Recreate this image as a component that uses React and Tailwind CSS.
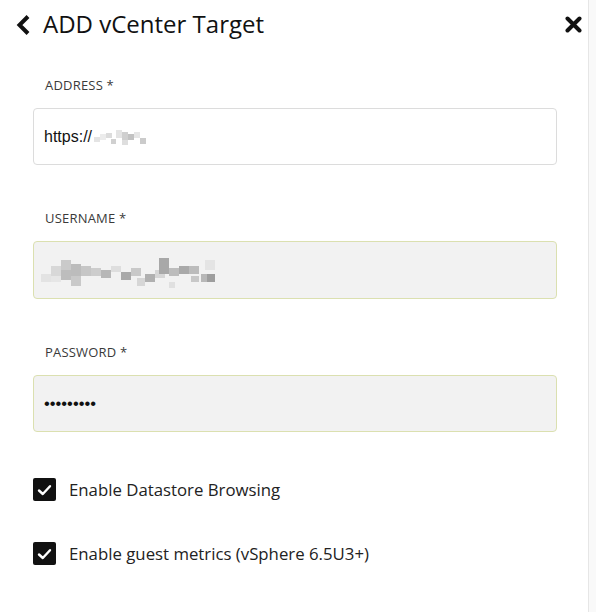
import React from "react";

function Blur({ cells, w, h }) {
  return (
    <svg width={w} height={h} viewBox={`0 0 ${w} ${h}`} className="block">
      {cells.map((c, i) => (
        <rect key={i} x={c[0]} y={c[1]} width={c[2]} height={c[3]} fill={c[4]} />
      ))}
    </svg>
  );
}

const addrCells = [
  [0, 9, 6, 5, "#e4e4e4"],
  [6, 6, 6, 6, "#ececec"],
  [12, 5, 6, 5, "#dcdcdc"],
  [17, 11, 5, 5, "#d0d0d0"],
  [22, 2, 6, 8, "#e4e4e4"],
  [28, 4, 6, 8, "#cfcfcf"],
  [28, 12, 6, 5, "#dedede"],
  [34, 6, 6, 6, "#c2c2c2"],
  [40, 4, 6, 6, "#e6e6e6"],
  [46, 10, 6, 6, "#cbcbcb"],
];

const userCells = [
  [0, 22, 10, 8, "#e3e3e3"],
  [10, 14, 10, 10, "#d8d8d8"],
  [10, 24, 10, 6, "#e6e6e6"],
  [20, 8, 10, 10, "#cacaca"],
  [20, 18, 10, 10, "#bdbdbd"],
  [30, 12, 10, 12, "#bcbcbc"],
  [30, 24, 10, 10, "#c9c9c9"],
  [40, 14, 10, 10, "#c6c6c6"],
  [50, 16, 10, 8, "#cdcdcd"],
  [60, 18, 10, 8, "#b7b7b7"],
  [70, 14, 10, 6, "#dedede"],
  [80, 20, 10, 8, "#a9a9a9"],
  [90, 16, 10, 8, "#c9c9c9"],
  [96, 26, 8, 8, "#d6d6d6"],
  [104, 22, 10, 8, "#b0b0b0"],
  [114, 18, 10, 8, "#d6d6d6"],
  [118, 6, 10, 16, "#a8a8a8"],
  [128, 16, 10, 8, "#bdbdbd"],
  [128, 30, 6, 6, "#e0e0e0"],
  [138, 14, 10, 8, "#a9a9a9"],
  [148, 14, 10, 8, "#bcbcbc"],
  [150, 24, 8, 6, "#c8c8c8"],
  [160, 22, 10, 8, "#b8b8b8"],
  [164, 8, 10, 10, "#e4e4e4"],
  [166, 22, 8, 8, "#9e9e9e"],
];

function Field({ label, children, filled, h = "h-[57px]" }) {
  return (
    <div className="flex flex-col">
      <div className="pl-3 text-[13px] leading-[18px] text-[#3a3a3a] tracking-[0.2px]">{label}</div>
      <div
        className={
          "mt-[14px] rounded-[4px] border flex items-center px-[10px] " +
          h +
          " " +
          (filled ? "bg-[#f2f2f2] border-[#dbe0b0]" : "bg-white border-[#dcdcdc]")
        }
      >
        {children}
      </div>
    </div>
  );
}

function Check({ label }) {
  return (
    <div className="flex items-center gap-[13px]">
      <div className="w-[23px] h-[23px] rounded-[2px] bg-[#111] flex items-center justify-center">
        <svg width="15" height="12" viewBox="0 0 15 12">
          <path d="M2 6.5 L5.8 10 L13 2.2" fill="none" stroke="white" strokeWidth="2.4" strokeLinecap="round" strokeLinejoin="round" />
        </svg>
      </div>
      <span className="text-[16.8px] text-[#222]">{label}</span>
    </div>
  );
}

export default function App() {
  return (
    <div className="w-[596px] h-[612px] flex bg-white" style={{ fontFamily: '"Open Sans", sans-serif' }}>
      <div className="w-[589px] border-r border-[#e6e6e6] flex flex-col">
        <div className="h-[48px] flex items-center pl-[15px] pr-[6px]">
          <svg width="16" height="22" viewBox="0 0 16 22" className="mt-[1px]">
            <path d="M13 2.5 L4.5 11 L13 19.5" fill="none" stroke="#111" strokeWidth="4" strokeLinejoin="miter" />
          </svg>
          <span className="ml-[12px] text-[24px] text-[#111] leading-none">ADD vCenter Target</span>
          <div className="flex-1" />
          <svg width="17" height="17" viewBox="0 0 17 17">
            <path d="M2.5 2.5 L14.5 14.5 M14.5 2.5 L2.5 14.5" stroke="#111" strokeWidth="4" strokeLinecap="round" />
          </svg>
        </div>
        <div className="px-[33px] pr-[31px] pt-[28px] flex flex-col gap-[44px]">
          <Field label="ADDRESS *">
            <span className="text-[16px] text-[#111]" style={{ fontFamily: '"Liberation Sans", Arial, sans-serif' }}>
              https://
            </span>
            <div className="ml-[2px]">
              <Blur cells={addrCells} w={52} h={18} />
            </div>
          </Field>
          <Field label="USERNAME *" filled h="h-[58px]">
            <div className="ml-[-3px]">
              <Blur cells={userCells} w={176} h={36} />
            </div>
          </Field>
          <Field label="PASSWORD *" filled>
            <span
              className="text-[16.5px] text-[#111] tracking-[0px]"
              style={{ fontFamily: '"Liberation Sans", Arial, sans-serif' }}
            >
              •••••••••
            </span>
          </Field>
        </div>
        <div className="px-[33px] mt-[45px] flex flex-col gap-[39px]">
          <Check label="Enable Datastore Browsing" />
          <Check label="Enable guest metrics (vSphere 6.5U3+)" />
        </div>
      </div>
      <div className="flex-1 bg-[#f9f9f9]" />
    </div>
  );
}
